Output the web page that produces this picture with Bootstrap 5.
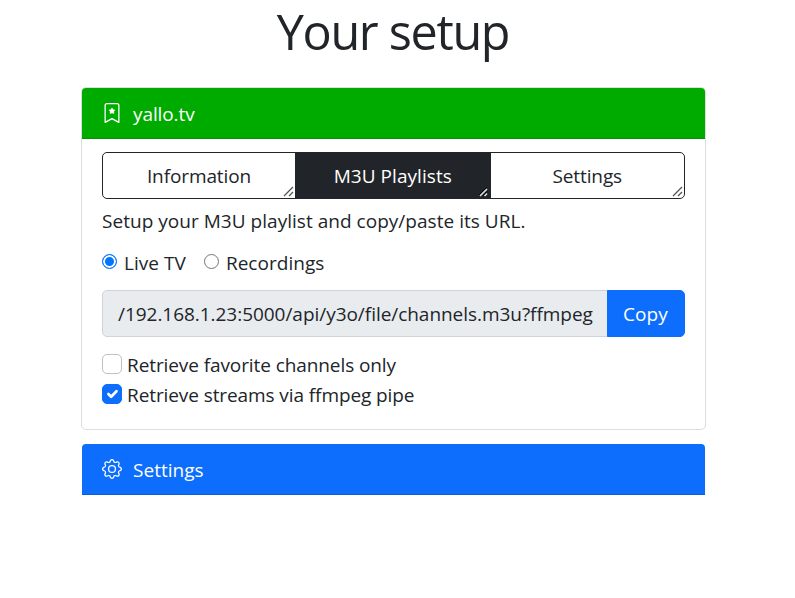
<!DOCTYPE html>
<html lang="en">
<head>
<meta charset="utf-8">
<meta name="viewport" content="width=device-width, initial-scale=1">
<title>Your setup</title>
<link href="https://cdn.jsdelivr.net/npm/bootstrap@5.3.0/dist/css/bootstrap.min.css" rel="stylesheet">
<style>
body{font-family:"Open Sans","Noto Sans",sans-serif;font-size:19px;line-height:30px;color:#212529;letter-spacing:-.1px}
.page{width:625px;margin-left:81px}
.page-title{font-size:48.5px;line-height:60px;height:88px;padding-top:1px;margin:0;font-weight:400;letter-spacing:-1.3px;padding-right:1px}
.panel{border:1px solid #dcdddf;border-radius:5px}
.panel-head{height:51px;padding:2px 20px 0;gap:11px;border-radius:4px 4px 0 0;border-bottom:1px solid #009400;background:#00ab00;color:#fff}
.panel-head svg{width:20px;height:20px;margin-top:-2px}
.panel-first{height:343px;margin-top:-1px}
.panel-body{padding:13px 20px 0}
.head-blue{background:#0d6efd;border-color:#0b5ed7}
.head-blue span{letter-spacing:.02px}
.panel-second{margin-top:14px;border:0;padding:0 1px}
.tabs .btn{--bs-btn-border-color:#212529;height:47px;flex:1 1 0;font-size:19px;line-height:30px;padding:8px 0;border-width:1px;border-radius:5px;position:relative;letter-spacing:inherit}
.tabs .btn-dark{letter-spacing:.05px}
.tabs .btn:first-child{flex:0 0 194px}
.grip{position:absolute;right:0;bottom:1px;width:12px;height:12px}
.intro{letter-spacing:.03px;margin-top:7px}
.radios{margin-top:12px;height:30px;gap:18px}
.radios span{letter-spacing:.04px}
.opt{gap:7px}
.opt .form-check-input{width:15px;height:15px;margin:-3px 0 0;border:1px solid #767676}
.opt .form-check-input:checked{background:#0075ff;border-color:#0075ff;box-shadow:inset 0 0 0 2px #fff;background-image:none}
.url{margin-top:12px}
.url .form-control{height:47px;font-size:19px;line-height:30px;padding:8px 12px 8px 15px;background:#e9ecef;border-color:#ced4da;border-radius:5px;letter-spacing:-.04px;color:#212529;white-space:nowrap}
.url .btn{width:78px;font-size:19px;padding:1px 1px 0 0;border-radius:5px;letter-spacing:.1px}
.checks{margin-top:12px}
.choice{gap:5px;height:30px;letter-spacing:-.09px}
.choice span{margin-top:2px}
.choice .form-check-input{width:20px;height:20px;margin:0;border-color:#bfbfbf;border-radius:5px}
.choice .form-check-input:checked{border-color:#0d6efd}
</style>
</head>
<body>
<main class="page">
<h1 class="page-title text-center">Your setup</h1>
<section class="panel panel-first">
<div class="panel-head d-flex align-items-center">
<svg viewBox="0 0 16 16" fill="#fff"><path d="M7.84 4.1a.18.18 0 0 1 .32 0l.58 1.17c.03.05.08.09.13.1l1.3.18c.14.02.2.2.1.3l-.94.92a.18.18 0 0 0-.05.16l.22 1.28a.18.18 0 0 1-.26.19l-1.16-.6a.18.18 0 0 0-.16 0l-1.16.6a.18.18 0 0 1-.26-.2l.22-1.27a.18.18 0 0 0-.05-.16l-.94-.91a.18.18 0 0 1 .1-.31l1.3-.19a.18.18 0 0 0 .13-.1z" stroke="#fff" stroke-width=".5"/><path d="M2 2a2 2 0 0 1 2-2h8a2 2 0 0 1 2 2v13.5a.5.5 0 0 1-.78.42L8 13.1l-5.22 2.82A.5.5 0 0 1 2 15.5zm2-1a1 1 0 0 0-1 1v12.57l4.72-2.49a.5.5 0 0 1 .56 0L13 14.57V2a1 1 0 0 0-1-1z"/></svg>
<span>yallo.tv</span>
</div>
<div class="panel-body">
<div class="btn-group tabs d-flex" role="group">
<button class="btn btn-outline-dark"><span>Information</span><svg class="grip" viewBox="0 0 12 12" stroke="#555" stroke-width="1.3"><path d="M1 11 10 2M6 11l4-4"/></svg></button>
<button class="btn btn-dark"><span>M3U Playlists</span><svg class="grip" viewBox="0 0 12 12"><path d="M2 11 9 4M6.500 11l2.500-2.500" stroke="#ddd" stroke-width="1.6"/><path d="M1 10 9 2M4.500 11 9 6.500" stroke="#000"/></svg></button>
<button class="btn btn-outline-dark"><span>Settings</span><svg class="grip" viewBox="0 0 12 12" stroke="#555" stroke-width="1.3"><path d="M1 11 10 2M6 11l4-4"/></svg></button>
</div>
<div class="intro"><span>Setup your M3U playlist and copy/paste its URL.</span></div>
<div class="radios d-flex">
<label class="opt d-flex align-items-center"><input class="form-check-input" type="radio" name="kind" checked><span>Live TV</span></label>
<label class="opt d-flex align-items-center"><input class="form-check-input" type="radio" name="kind"><span>Recordings</span></label>
</div>
<div class="input-group url">
<div class="form-control"><span>/192.168.1.23:5000/api/y3o/file/channels.m3u?ffmpeg</span></div>
<button class="btn btn-primary"><span>Copy</span></button>
</div>
<div class="checks">
<label class="choice d-flex align-items-center"><input class="form-check-input" type="checkbox"><span>Retrieve favorite channels only</span></label>
<label class="choice d-flex align-items-center"><input class="form-check-input" type="checkbox" checked><span>Retrieve streams via ffmpeg pipe</span></label>
</div>
</div>
</section>
<section class="panel panel-second">
<div class="panel-head head-blue d-flex align-items-center">
<svg viewBox="0 0 16 16" fill="#fff"><path d="M8 4.754a3.246 3.246 0 1 0 0 6.492 3.246 3.246 0 0 0 0-6.492zM5.754 8a2.246 2.246 0 1 1 4.492 0 2.246 2.246 0 0 1-4.492 0z"/><path d="M9.796 1.343c-.527-1.790-3.065-1.790-3.592 0l-.094.319a.873.873 0 0 1-1.255.520l-.292-.160c-1.640-.892-3.433.902-2.540 2.541l.159.292a.873.873 0 0 1-.520 1.255l-.319.094c-1.790.527-1.790 3.065 0 3.592l.319.094a.873.873 0 0 1 .520 1.255l-.160.292c-.892 1.640.901 3.434 2.541 2.540l.292-.159a.873.873 0 0 1 1.255.520l.094.319c.527 1.790 3.065 1.790 3.592 0l.094-.319a.873.873 0 0 1 1.255-.520l.292.160c1.640.893 3.434-.902 2.540-2.541l-.159-.292a.873.873 0 0 1 .520-1.255l.319-.094c1.790-.527 1.790-3.065 0-3.592l-.319-.094a.873.873 0 0 1-.520-1.255l.160-.292c.893-1.640-.902-3.433-2.541-2.540l-.292.159a.873.873 0 0 1-1.255-.520l-.094-.319zm-2.633.283c.246-.835 1.428-.835 1.674 0l.094.319a1.873 1.873 0 0 0 2.693 1.115l.291-.160c.764-.415 1.600.420 1.184 1.185l-.159.292a1.873 1.873 0 0 0 1.116 2.692l.318.094c.835.246.835 1.428 0 1.674l-.319.094a1.873 1.873 0 0 0-1.115 2.693l.160.291c.415.764-.420 1.600-1.185 1.184l-.291-.159a1.873 1.873 0 0 0-2.693 1.116l-.094.318c-.246.835-1.428.835-1.674 0l-.094-.319a1.873 1.873 0 0 0-2.692-1.115l-.292.160c-.764.415-1.600-.420-1.184-1.185l.159-.291A1.873 1.873 0 0 0 1.945 8.930l-.319-.094c-.835-.246-.835-1.428 0-1.674l.319-.094A1.873 1.873 0 0 0 3.060 4.377l-.160-.292c-.415-.764.420-1.600 1.185-1.184l.292.159a1.873 1.873 0 0 0 2.692-1.115l.094-.319z"/></svg>
<span>Settings</span>
</div>
</section>
</main>
<script src="https://cdn.jsdelivr.net/npm/bootstrap@5.3.0/dist/js/bootstrap.bundle.min.js"></script>
</body>
</html>
